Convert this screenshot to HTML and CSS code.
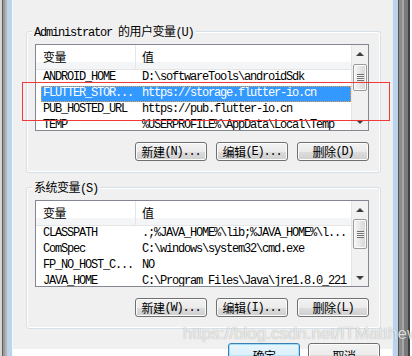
FILE: index.html
```html
<!DOCTYPE html>
<html lang="zh-CN">
<head>
<meta charset="utf-8">
<title>环境变量</title>
<link rel="stylesheet" href="styles.css">
</head>
<body>
<div class="screen">
  <div class="frame-left"></div>
  <div class="dialog">
    <section class="group">
      <div class="legend"><span class="lat">Administrator </span><span class="zh">的用户变量</span><span class="lat">(U)</span></div>
      <div class="list">
        <div class="list-main">
          <div class="list-head"><div class="h1"><span class="zh">变量</span></div><div class="h2"><span class="zh">值</span></div></div>
          <div class="row"><span class="c1">ANDROID_HOME</span><span class="c2">D:\softwareTools\androidSdk</span></div>
          <div class="row selected"><span class="c1">FLUTTER_STOR...</span><span class="c2">https://storage.flutter-io.cn</span></div>
          <div class="row"><span class="c1">PUB_HOSTED_URL</span><span class="c2">https://pub.flutter-io.cn</span></div>
          <div class="row"><span class="c1">TEMP</span><span class="c2">%USERPROFILE%\AppData\Local\Temp</span></div>
        </div>
        <div class="scrollbar">
          <div class="sb-btn"><span class="arrow-up"></span></div>
          <div class="sb-thumb thumb-user"></div>
          <div class="sb-fill"></div>
          <div class="sb-btn"><span class="arrow-down"></span></div>
        </div>
      </div>
      <div class="btns">
        <button class="btn"><span class="zh">新建</span><span class="lat">(N)...</span></button>
        <button class="btn"><span class="zh">编辑</span><span class="lat">(E)...</span></button>
        <button class="btn"><span class="zh">删除</span><span class="lat">(D)</span></button>
      </div>
    </section>
    <section class="group group-sys">
      <div class="legend"><span class="zh">系统变量</span><span class="lat">(S)</span></div>
      <div class="list">
        <div class="list-main">
          <div class="list-head"><div class="h1"><span class="zh">变量</span></div><div class="h2"><span class="zh">值</span></div></div>
          <div class="row"><span class="c1">CLASSPATH</span><span class="c2">.;%JAVA_HOME%\lib;%JAVA_HOME%\l...</span></div>
          <div class="row"><span class="c1">ComSpec</span><span class="c2">C:\windows\system32\cmd.exe</span></div>
          <div class="row"><span class="c1">FP_NO_HOST_C...</span><span class="c2">NO</span></div>
          <div class="row"><span class="c1">JAVA_HOME</span><span class="c2">C:\Program Files\Java\jre1.8.0_221</span></div>
        </div>
        <div class="scrollbar">
          <div class="sb-btn"><span class="arrow-up"></span></div>
          <div class="sb-thumb thumb-sys"></div>
          <div class="sb-fill"></div>
          <div class="sb-btn"><span class="arrow-down"></span></div>
        </div>
      </div>
      <div class="btns">
        <button class="btn"><span class="zh">新建</span><span class="lat">(W)...</span></button>
        <button class="btn"><span class="zh">编辑</span><span class="lat">(I)...</span></button>
        <button class="btn"><span class="zh">删除</span><span class="lat">(L)</span></button>
      </div>
    </section>
    <div class="footer">
      <button class="btn btn-big btn-default"><span class="zh">确定</span></button>
      <button class="btn btn-big"><span class="zh">取消</span></button>
    </div>
  </div>
  <div class="frame-right"></div>
  <div class="highlight"></div>
  <div class="watermark">https://blog.csdn.net/ITMatthew</div>
</div>
</body>
</html>
```
FILE: styles.css
```css
html, body {
  margin: 0;
  padding: 0;
  background: #ffffff;
}

.screen {
  position: relative;
  display: flex;
  width: 412px;
  height: 356px;
  overflow: hidden;
  color: #000;
  font-family: "Liberation Mono", "Noto Sans CJK SC", monospace;
  font-size: 12px;
}

.lat {
  font-family: "Liberation Mono", monospace;
  font-size: 12px;
  letter-spacing: -1.2px;
}

.zh {
  font-family: "Noto Sans CJK SC", sans-serif;
  font-size: 12px;
  letter-spacing: -0.5px;
}

.frame-left {
  width: 13px;
  flex: none;
  background: linear-gradient(to right,
    #d6d6d6 0 2px, #5c5c5c 2px 3px, #9a9a9a 3px 5px, #b4b4b4 5px 7px,
    #bcd3ec 7px 12px, #f7f9fb 12px 13px);
}

.frame-right {
  width: 20px;
  flex: none;
  background: linear-gradient(to right,
    #e6eef7 0 1px, #bcd3ec 1px 6px, #555 6px 7px, #8c8c8c 7px 10px,
    #a6a6a6 10px 12px, #7a7a7a 12px 16px, #404040 16px 18px, #ffffff 18px 20px);
}

.dialog {
  flex: 1;
  display: flex;
  flex-direction: column;
  background: #f0f0f0;
  min-width: 0;
}

.group {
  margin: 31px 11px 0 13px;
  padding: 0 11px 11px 8px;
  border: 1px solid #d5dfe5;
  border-radius: 3px;
  box-shadow: inset 0 0 0 1px #ffffff;
}

.group-sys {
  margin-top: 14px;
}

.legend {
  width: max-content;
  height: 14px;
  line-height: 14px;
  margin: -8px 0 0 -3px;
  padding: 0 2px;
  background: #f0f0f0;
  white-space: nowrap;
}

.list {
  display: flex;
  margin-top: 6px;
  height: 87px;
  box-sizing: border-box;
  border: 1px solid #828790;
  background: #fff;
}

.list-main {
  flex: 1;
  min-width: 0;
  overflow: hidden;
}

.list-head {
  display: flex;
  height: 25px;
  box-sizing: border-box;
  line-height: 23px;
  border-bottom: 1px solid #e5e5e5;
  background: linear-gradient(#ffffff 0 70%, #f4f5f7 70% 100%);
}

.h1 {
  width: 100px;
  box-sizing: border-box;
  padding-left: 7px;
  border-right: 1px solid #e3e6ea;
}

.h2 {
  padding-left: 6px;
}

.row {
  display: flex;
  height: 16px;
  line-height: 14px;
  margin-left: 5px;
  white-space: nowrap;
  overflow: hidden;
  font-family: "Liberation Mono", monospace;
  font-size: 12px;
  letter-spacing: -1.2px;
}

.c1 {
  width: 95px;
  flex: none;
  box-sizing: border-box;
  padding-left: 2px;
  overflow: hidden;
}

.c2 {
  padding-left: 6px;
}

.selected {
  background: #3399ff;
  color: #fff;
  outline: 1px dotted #e8a050;
  outline-offset: -1px;
}

.scrollbar {
  width: 17px;
  flex: none;
  display: flex;
  flex-direction: column;
  background: linear-gradient(to right, #e4e4e4 0 1px, #f1f1f1 1px 100%);
}

.sb-btn {
  height: 17px;
  flex: none;
  display: flex;
  align-items: center;
  justify-content: center;
}

.arrow-up {
  width: 0;
  height: 0;
  border-left: 4px solid transparent;
  border-right: 4px solid transparent;
  border-bottom: 4px solid #3e3e3e;
}

.arrow-down {
  width: 0;
  height: 0;
  border-left: 4px solid transparent;
  border-right: 4px solid transparent;
  border-top: 4px solid #3e3e3e;
}

.sb-thumb {
  flex: none;
  margin: 2px 1px 0 2px;
  box-sizing: border-box;
  border: 1px solid #9a9a9a;
  border-radius: 2px;
  background: linear-gradient(to right, #f6f6f6, #e6e6e6 50%, #d6d6d6);
  box-shadow: inset 0 0 0 1px #fbfbfb;
  display: flex;
  align-items: center;
  justify-content: center;
}

.sb-thumb::before {
  content: "";
  width: 7px;
  height: 7px;
  background: repeating-linear-gradient(#707070 0 1px, #f4f4f4 1px 2px);
}

.thumb-user {
  height: 27px;
}

.thumb-sys {
  height: 30px;
  margin-top: 1px;
}

.sb-fill {
  flex: 1;
}

.btns {
  display: flex;
  justify-content: flex-end;
  gap: 9px;
  margin-top: 11px;
}

.btn {
  width: 72px;
  height: 19px;
  flex: none;
  box-sizing: border-box;
  padding: 0;
  margin: 0;
  border: 1px solid #707070;
  border-radius: 3px;
  background: linear-gradient(#f2f2f2 0%, #ebebeb 50%, #dddddd 50%, #cfcfcf 100%);
  box-shadow: inset 0 0 0 1px #fcfcfc;
  color: #000;
  line-height: 16px;
  white-space: nowrap;
  font: inherit;
  display: flex;
  align-items: center;
  justify-content: center;
}

.btn-big {
  height: 24px;
}

.btn-default {
  border-color: #3c7fb1;
  box-shadow: inset 0 0 0 1px #9fdcf7;
  background: linear-gradient(#eaf6fd 0%, #d9f0fc 50%, #bee6fd 50%, #a7d9f5 100%);
}

.footer {
  flex: 1;
  min-height: 0;
  display: flex;
  justify-content: flex-end;
  align-items: flex-start;
  gap: 8px;
  padding: 14px 12px 0 0;
  background: linear-gradient(#f0f0f0 0 20px, #ffffff 20px 100%);
}

.highlight {
  position: absolute;
  left: 22px;
  top: 82px;
  width: 368px;
  height: 39px;
  box-sizing: border-box;
  border: 1px solid #f03a3a;
  pointer-events: none;
}

.watermark {
  position: absolute;
  left: 183px;
  top: 324px;
  font-family: "Liberation Sans", Arial, sans-serif;
  font-size: 17px;
  line-height: 20px;
  color: rgba(255, 255, 255, 0.8);
  text-shadow: 0 0 1px rgba(0, 0, 0, 0.4);
  white-space: nowrap;
  pointer-events: none;
}
```
